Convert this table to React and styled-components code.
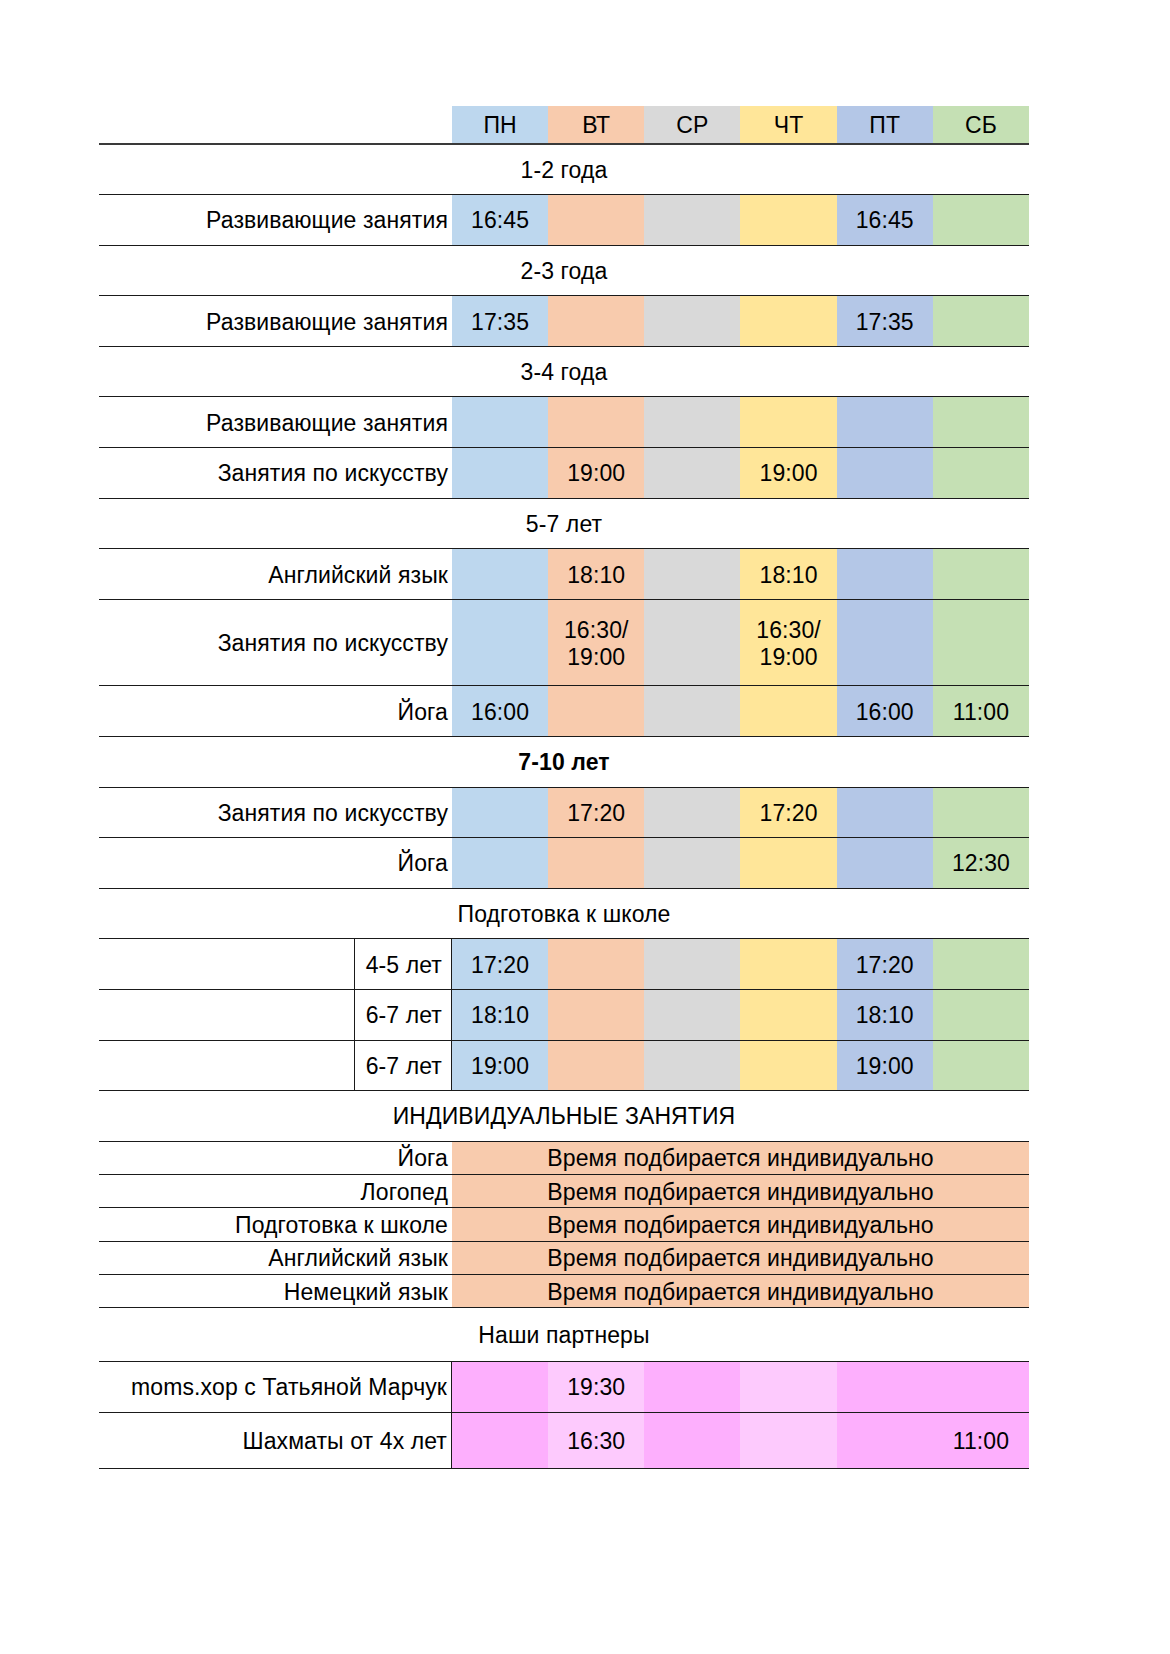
import React from "react";
import styled, { createGlobalStyle } from "styled-components";

const Global = createGlobalStyle`
  html, body { margin: 0; padding: 0; background: #fff; }
  body { font-family: "Liberation Sans", Arial, sans-serif; color: #000; }
`;

const C = {
  mon: "#bdd7ee",
  tue: "#f8cbad",
  wed: "#d9d9d9",
  thu: "#ffe699",
  fri: "#b4c7e7",
  sat: "#c5e0b4",
  pink: "#fdaffd",
  pinkLight: "#fdcafd",
};

const DAY_COLORS = [C.mon, C.tue, C.wed, C.thu, C.fri, C.sat];

const Sheet = styled.div`
  padding: 106px 0 140px 99px;
`;

const Table = styled.div`
  width: 930px;
  display: flex;
  flex-direction: column;
`;

const Row = styled.div`
  display: grid;
  grid-template-columns: 353px repeat(6, 1fr);
  height: ${(p) => p.$h}px;
  border-bottom: ${(p) => (p.$thick ? "2px solid #3a3a3a" : "1px solid #1a1a1a")};
  box-sizing: border-box;
  font-size: 23px;
  letter-spacing: 0.1px;
  line-height: 27px;
`;

const Label = styled.div`
  display: flex;
  align-items: center;
  justify-content: flex-end;
  padding: 2px 4px 0 0;
  white-space: nowrap;
  border-right: ${(p) => (p.$line ? "1px solid #1a1a1a" : "none")};
`;

const SplitLabel = styled.div`
  display: grid;
  grid-template-columns: 256px 1fr;
  border-right: 1px solid #1a1a1a;
`;

const Blank = styled.div`
  border-right: 1px solid #1a1a1a;
`;

const SubLabel = styled.div`
  display: flex;
  align-items: center;
  justify-content: flex-end;
  padding: 2px 9px 0 0;
  white-space: nowrap;
`;

const Day = styled.div`
  background: ${(p) => p.$bg};
  display: flex;
  align-items: center;
  justify-content: center;
  padding-top: 2px;
  text-align: center;
  white-space: pre-line;
`;

const Title = styled.div`
  grid-column: 1 / -1;
  display: flex;
  align-items: center;
  justify-content: center;
  padding-top: 2px;
  font-weight: ${(p) => (p.$bold ? 700 : 400)};
`;

const Wide = styled.div`
  grid-column: 2 / -1;
  background: ${C.tue};
  display: flex;
  align-items: center;
  justify-content: center;
  padding-top: 2px;
`;

const DAYS = ["ПН", "ВТ", "СР", "ЧТ", "ПТ", "СБ"];

const Days = ({ values = [], colors = DAY_COLORS }) =>
  colors.map((c, i) => (
    <Day key={i} $bg={c}>
      {values[i] || ""}
    </Day>
  ));

const Lesson = ({ label, values, h = 50.6, colors, line }) => (
  <Row $h={h}>
    <Label $line={line}>{label}</Label>
    <Days values={values} colors={colors} />
  </Row>
);

const Section = ({ children, bold, h = 50.6 }) => (
  <Row $h={h}>
    <Title $bold={bold}>{children}</Title>
  </Row>
);

const School = ({ age, values }) => (
  <Row $h={50.6}>
    <SplitLabel>
      <Blank />
      <SubLabel>{age}</SubLabel>
    </SplitLabel>
    <Days values={values} />
  </Row>
);

const Individual = ({ label }) => (
  <Row $h={33.3}>
    <Label>{label}</Label>
    <Wide>Время подбирается индивидуально</Wide>
  </Row>
);

const PARTNER_COLORS = [C.pink, C.pinkLight, C.pink, C.pinkLight, C.pink, C.pink];

export default function App() {
  return (
    <Sheet>
      <Global />
      <Table>
        <Row $h={38.5} $thick>
          <Label />
          <Days values={DAYS} />
        </Row>

        <Section>1-2 года</Section>
        <Lesson label="Развивающие занятия" values={["16:45", "", "", "", "16:45"]} />

        <Section>2-3 года</Section>
        <Lesson label="Развивающие занятия" values={["17:35", "", "", "", "17:35"]} />

        <Section>3-4 года</Section>
        <Lesson label="Развивающие занятия" />
        <Lesson label="Занятия по искусству" values={["", "19:00", "", "19:00"]} />

        <Section>5-7 лет</Section>
        <Lesson label="Английский язык" values={["", "18:10", "", "18:10"]} />
        <Lesson
          label="Занятия по искусству"
          h={86.5}
          values={["", "16:30/\n19:00", "", "16:30/\n19:00"]}
        />
        <Lesson label="Йога" values={["16:00", "", "", "", "16:00", "11:00"]} />

        <Section bold>7-10 лет</Section>
        <Lesson label="Занятия по искусству" values={["", "17:20", "", "17:20"]} />
        <Lesson label="Йога" values={["", "", "", "", "", "12:30"]} />

        <Section>Подготовка к школе</Section>
        <School age="4-5 лет" values={["17:20", "", "", "", "17:20"]} />
        <School age="6-7 лет" values={["18:10", "", "", "", "18:10"]} />
        <School age="6-7 лет" values={["19:00", "", "", "", "19:00"]} />

        <Section>ИНДИВИДУАЛЬНЫЕ ЗАНЯТИЯ</Section>
        <Individual label="Йога" />
        <Individual label="Логопед" />
        <Individual label="Подготовка к школе" />
        <Individual label="Английский язык" />
        <Individual label="Немецкий язык" />

        <Section h={53.5}>Наши партнеры</Section>
        <Lesson
          label="moms.xop с Татьяной Марчук"
          h={51}
          line
          colors={PARTNER_COLORS}
          values={["", "19:30"]}
        />
        <Lesson
          label="Шахматы от 4х лет"
          h={56.5}
          line
          colors={PARTNER_COLORS}
          values={["", "16:30", "", "", "", "11:00"]}
        />
      </Table>
    </Sheet>
  );
}
